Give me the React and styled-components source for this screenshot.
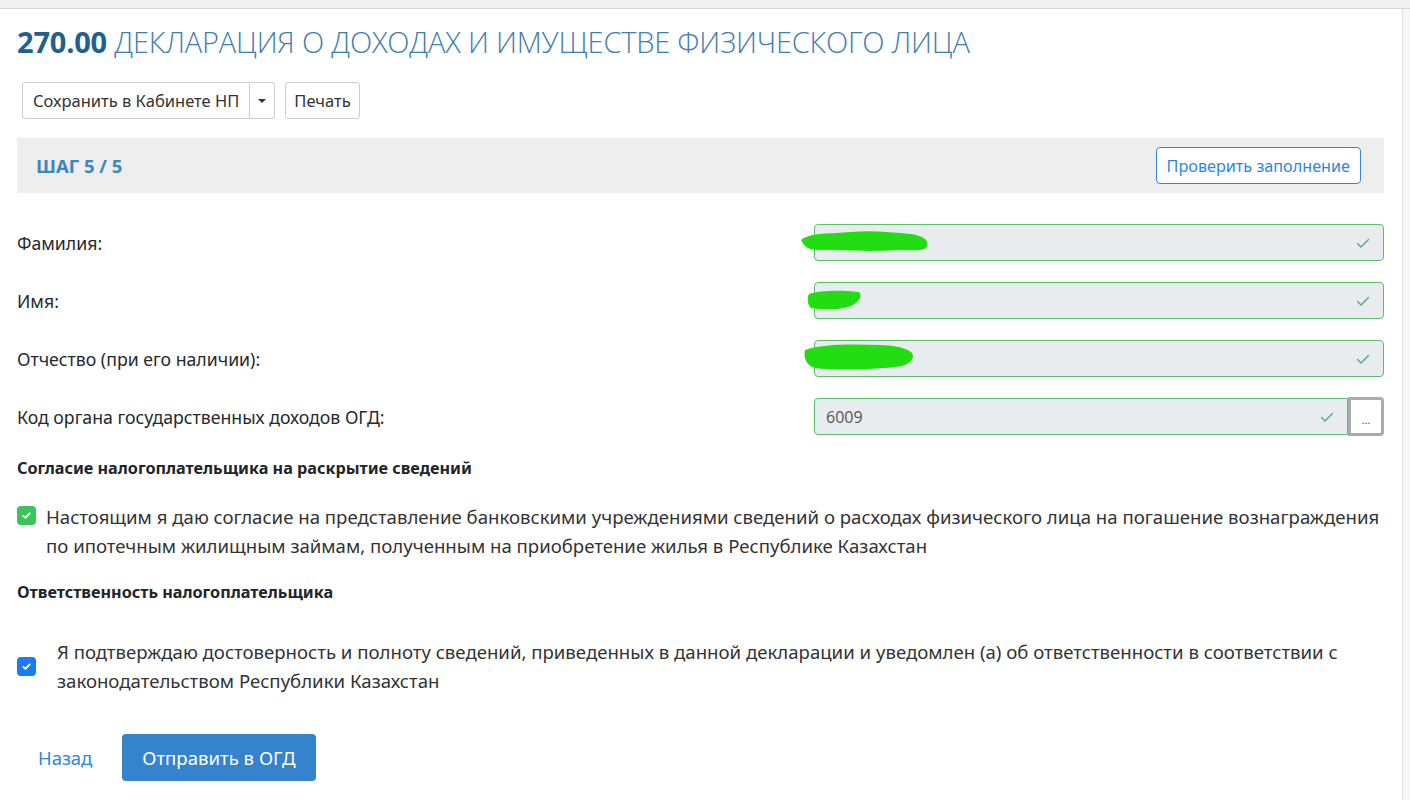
import React from "react";
import styled, { createGlobalStyle } from "styled-components";

const Global = createGlobalStyle`
  html, body { margin: 0; padding: 0; background: #fff; }
  body { font-family: "Noto Sans", "Open Sans", sans-serif; color: #212529; }
  * { box-sizing: border-box; }
`;

const TopBar = styled.div`
  height: 9px;
  background: #f0f0f0;
  border-bottom: 1px solid #d6d6d6;
`;

const Frame = styled.div`
  display: flex;
  min-height: 791px;
`;

const Main = styled.main`
  flex: 1;
  padding: 0 18px 0 17px;
`;

const Gutter = styled.div`
  width: 8px;
  background: #f6f6f6;
  border-left: 1px solid #e2e2e2;
`;

const Title = styled.h1`
  margin: 15px 0 0;
  font-family: "Open Sans", sans-serif;
  font-size: 29px;
  line-height: 35px;
  font-weight: 300;
  color: #3f7db2;
  letter-spacing: -0.2px;
  b { font-weight: 700; color: #225f8e; }
`;

const Toolbar = styled.div`
  display: flex;
  gap: 10px;
  margin: 23px 0 0 5px;
`;

const SplitGroup = styled.div`
  display: flex;
`;

const ToolButton = styled.button`
  height: 37px;
  padding: 0 ${(p) => p.$pad || "10px"};
  font-family: "Noto Sans", sans-serif;
  font-size: 16.5px;
  color: #333;
  background: #fff;
  border: 1px solid #ccc;
  border-radius: ${(p) => p.$radius || "3px"};
  display: flex;
  align-items: center;
  justify-content: center;
  ${(p) => p.$caret && "width: 25px; padding: 0; border-left: none;"}
`;

const Caret = styled.span`
  width: 0;
  height: 0;
  border-left: 4px solid transparent;
  border-right: 4px solid transparent;
  border-top: 4px solid #333;
`;

const StepPanel = styled.div`
  margin-top: 19px;
  height: 55px;
  background: #eeeeee;
  display: flex;
  align-items: center;
  justify-content: space-between;
  padding: 0 23px 0 19px;
`;

const StepTitle = styled.span`
  font-family: "Open Sans", sans-serif;
  font-size: 18.5px;
  font-weight: 700;
  color: #3a86c2;
`;

const OutlineButton = styled.button`
  height: 37px;
  padding: 0 10px;
  font-family: "Noto Sans", sans-serif;
  font-size: 16.2px;
  color: #2f86e0;
  background: #fff;
  border: 1px solid #2f86e0;
  border-radius: 4px;
`;

const Form = styled.div`
  margin-top: 31px;
  display: flex;
  flex-direction: column;
  gap: 21px;
`;

const Row = styled.div`
  display: grid;
  grid-template-columns: 797px 1fr;
  align-items: center;
`;

const Label = styled.label`
  font-size: 17.7px;
  color: #26292c;
`;

const InputGroup = styled.div`
  display: flex;
  align-items: stretch;
  height: 37px;
`;

const Field = styled.div`
  flex: 1;
  position: relative;
  background: #e9ecef;
  border: 1px solid #5cbf6a;
  border-radius: ${(p) => (p.$attached ? "4px 0 0 4px" : "4px")};
  display: flex;
  align-items: center;
  padding: 0 12px 0 11px;
  font-family: "Open Sans", sans-serif;
  font-size: 16px;
  color: #555;
`;

const Value = styled.span`
  flex: 1;
`;

const Scribble = styled.svg`
  position: absolute;
  left: -14px;
  top: 1px;
  overflow: visible;
`;

const Ellipsis = styled.button`
  width: 36px;
  background: #fff;
  border: 3px solid #a9abae;
  border-radius: 0 4px 4px 0;
  margin: -1px 0 -1px 0;
  font-size: 11px;
  color: #333;
  padding: 6px 0 0;
`;

const SectionTitle = styled.h4`
  margin: ${(p) => p.$mt || "23px"} 0 0;
  font-size: 16.2px;
  line-height: 20px;
  font-weight: 700;
  color: #212529;
`;

const CheckRow = styled.div`
  margin-top: ${(p) => p.$mt};
  display: flex;
  align-items: ${(p) => (p.$center ? "center" : "flex-start")};
  gap: ${(p) => p.$gap};
`;

const Box = styled.span`
  flex: none;
  width: 19px;
  height: 19px;
  border-radius: 4px;
  background: ${(p) => p.$color};
  display: flex;
  align-items: center;
  justify-content: center;
  margin-top: ${(p) => p.$mt || "0"};
`;

const CheckText = styled.p`
  margin: 0;
  font-size: 18.6px;
  line-height: 28.5px;
  color: #333;
`;

const Actions = styled.div`
  margin-top: 39px;
  display: flex;
  align-items: center;
  gap: 30px;
  padding-left: 21px;
`;

const BackLink = styled.a`
  font-size: 18.4px;
  color: #2f86e0;
  text-decoration: none;
`;

const PrimaryButton = styled.button`
  height: 47px;
  padding: 0 20px;
  background: #3483cc;
  color: #fff;
  border: none;
  border-radius: 4px;
  font-family: "Noto Sans", sans-serif;
  font-size: 18.6px;
`;

const Tick = ({ color = "#4cae6a", size = 16 }) => (
  <svg width={size} height={size} viewBox="0 0 16 16" fill="none">
    <path d="M2.5 8.5l3.5 3.5 7.5-7.5" stroke={color} strokeWidth="1.4" strokeLinecap="round" strokeLinejoin="round" />
  </svg>
);

const BoxTick = () => (
  <svg width="11" height="11" viewBox="0 0 12 12" fill="none">
    <path d="M2.5 6.3l2.3 2.3 4.7-4.9" stroke="#fff" strokeWidth="2" strokeLinecap="round" strokeLinejoin="round" />
  </svg>
);

const scribbles = [
  { w: 130, d: "M0 14 C10 6 30 8 50 6 C70 4 90 6 110 8 C122 10 128 14 126 20 C124 26 110 24 96 24 C70 26 40 24 20 24 C8 24 4 22 0 14 Z" },
  { w: 60, d: "M8 10 C20 6 40 6 58 8 C62 12 58 18 50 22 C40 26 22 26 10 24 C6 20 6 14 8 10 Z" },
  { w: 115, d: "M4 8 C20 2 50 2 80 3 C100 4 112 8 112 14 C112 22 100 26 80 26 C60 28 30 28 14 26 C6 24 2 16 4 8 Z" },
];

const fields = [
  { label: "Фамилия:", s: 0 },
  { label: "Имя:", s: 1 },
  { label: "Отчество (при его наличии):", s: 2 },
];

export default function App() {
  return (
    <>
      <Global />
      <TopBar />
      <Frame>
        <Main>
          <Title>
            <b>270.00</b> ДЕКЛАРАЦИЯ О ДОХОДАХ И ИМУЩЕСТВЕ ФИЗИЧЕСКОГО ЛИЦА
          </Title>
          <Toolbar>
            <SplitGroup>
              <ToolButton $radius="3px 0 0 3px">Сохранить в Кабинете НП</ToolButton>
              <ToolButton $caret $radius="0 3px 3px 0">
                <Caret />
              </ToolButton>
            </SplitGroup>
            <ToolButton $pad="8px">Печать</ToolButton>
          </Toolbar>
          <StepPanel>
            <StepTitle>ШАГ 5 / 5</StepTitle>
            <OutlineButton>Проверить заполнение</OutlineButton>
          </StepPanel>
          <Form>
            {fields.map((f) => (
              <Row key={f.label}>
                <Label>{f.label}</Label>
                <InputGroup>
                  <Field>
                    <Scribble width={scribbles[f.s].w} height="30">
                      <path d={scribbles[f.s].d} fill="#22dd11" />
                    </Scribble>
                    <Value />
                    <Tick />
                  </Field>
                </InputGroup>
              </Row>
            ))}
            <Row>
              <Label>Код органа государственных доходов ОГД:</Label>
              <InputGroup>
                <Field $attached>
                  <Value>6009</Value>
                  <Tick />
                </Field>
                <Ellipsis>...</Ellipsis>
              </InputGroup>
            </Row>
          </Form>
          <SectionTitle>Согласие налогоплательщика на раскрытие сведений</SectionTitle>
          <CheckRow $mt="25px" $gap="10px">
            <Box $color="#3cc35a" $mt="3px">
              <BoxTick />
            </Box>
            <CheckText>
              Настоящим я даю согласие на представление банковскими учреждениями сведений о расходах физического лица на погашение вознаграждения по ипотечным жилищным займам, полученным на приобретение жилья в Республике Казахстан
            </CheckText>
          </CheckRow>
          <SectionTitle $mt="22px">Ответственность налогоплательщика</SectionTitle>
          <CheckRow $mt="36px" $gap="21px" $center>
            <Box $color="#1a7cf5">
              <BoxTick />
            </Box>
            <CheckText>
              Я подтверждаю достоверность и полноту сведений, приведенных в данной декларации и уведомлен (а) об ответственности в соответствии с законодательством Республики Казахстан
            </CheckText>
          </CheckRow>
          <Actions>
            <BackLink href="#">Назад</BackLink>
            <PrimaryButton>Отправить в ОГД</PrimaryButton>
          </Actions>
        </Main>
        <Gutter />
      </Frame>
    </>
  );
}
